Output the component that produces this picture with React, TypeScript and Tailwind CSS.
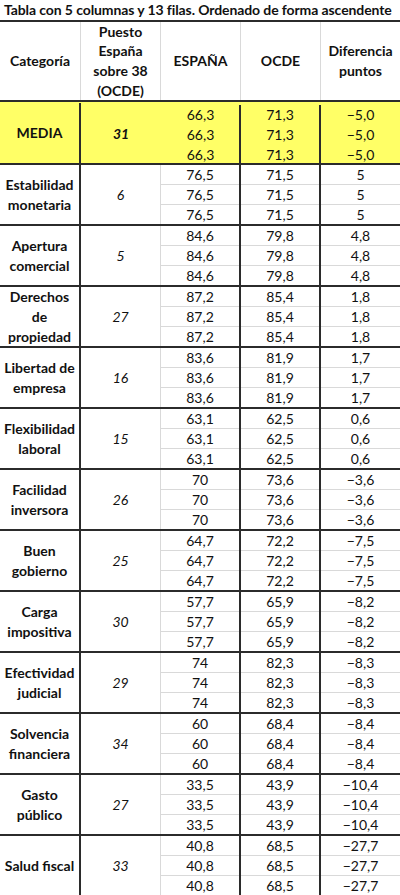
import React from "react";

interface Fila {
  categoria: string[];
  puesto: string;
  espana: string;
  ocde: string;
  dif: string;
}

const filas: Fila[] = [
  { categoria: ["Estabilidad", "monetaria"], puesto: "6", espana: "76,5", ocde: "71,5", dif: "5" },
  { categoria: ["Apertura", "comercial"], puesto: "5", espana: "84,6", ocde: "79,8", dif: "4,8" },
  { categoria: ["Derechos", "de", "propiedad"], puesto: "27", espana: "87,2", ocde: "85,4", dif: "1,8" },
  { categoria: ["Libertad de", "empresa"], puesto: "16", espana: "83,6", ocde: "81,9", dif: "1,7" },
  { categoria: ["Flexibilidad", "laboral"], puesto: "15", espana: "63,1", ocde: "62,5", dif: "0,6" },
  { categoria: ["Facilidad", "inversora"], puesto: "26", espana: "70", ocde: "73,6", dif: "−3,6" },
  { categoria: ["Buen", "gobierno"], puesto: "25", espana: "64,7", ocde: "72,2", dif: "−7,5" },
  { categoria: ["Carga", "impositiva"], puesto: "30", espana: "57,7", ocde: "65,9", dif: "−8,2" },
  { categoria: ["Efectividad", "judicial"], puesto: "29", espana: "74", ocde: "82,3", dif: "−8,3" },
  { categoria: ["Solvencia", "financiera"], puesto: "34", espana: "60", ocde: "68,4", dif: "−8,4" },
  { categoria: ["Gasto", "público"], puesto: "27", espana: "33,5", ocde: "43,9", dif: "−10,4" },
  { categoria: ["Salud fiscal"], puesto: "33", espana: "40,8", ocde: "68,5", dif: "−27,7" },
];

function ValueCol({ value, className, gray }: { value: string; className: string; gray: boolean }) {
  return (
    <div className={`flex flex-col ${className}`}>
      {[0, 1, 2].map((i) => (
        <div
          key={i}
          className={`flex items-center justify-center ${i < 2 ? "h-[20px] border-b" : "h-[19px]"} ${gray ? "border-[#d9d9d9]" : "border-transparent"}`}
        >
          {value}
        </div>
      ))}
    </div>
  );
}

function Grupo({ fila, media }: { fila: Fila; media?: boolean }) {
  return (
    <div
      className={`flex border-b-2 border-[#2b2b2b] ${media ? "bg-[#ffff66] h-[63px] pt-[3px]" : "h-[61px]"}`}
    >
      <div
        className={`w-[81px] border-r-2 border-[#2b2b2b] flex flex-col items-center justify-center font-bold leading-[20px] text-center ${media ? "-mt-[2px]" : ""}`}
      >
        {fila.categoria.map((l) => (
          <span key={l}>{l}</span>
        ))}
      </div>
      <div
        className={`w-[80px] flex items-center justify-center italic ${media ? "font-bold -mt-[2px]" : "border-r border-[#d9d9d9]"}`}
      >
        {fila.puesto}
      </div>
      <ValueCol value={fila.espana} gray={!media} className={`w-[80px] border-r-2 border-[#2b2b2b] ${media ? "pl-px" : ""}`} />
      <ValueCol value={fila.ocde} gray={!media} className="w-[80px] border-r-2 border-[#2b2b2b]" />
      <ValueCol value={fila.dif} gray={!media} className="flex-1" />
    </div>
  );
}

export default function App() {
  return (
    <div
      className="w-[400px] h-[895px] overflow-hidden bg-white text-[#111] text-[14px]"
      style={{ fontFamily: "Lato, 'Noto Sans', sans-serif" }}
    >
      <div className="h-[22px] border-b-2 border-[#2b2b2b] px-[4px] font-bold text-[14px] leading-[20px] whitespace-nowrap tracking-[-0.1px]">
        Tabla con 5 columnas y 13 filas. Ordenado de forma ascendente
      </div>
      <div className="h-[80px] flex border-b-2 border-[#2b2b2b] font-bold text-center leading-[19.7px]">
        <div className="w-[81px] border-r border-[#d9d9d9] flex items-center justify-center">Categoría</div>
        <div className="w-[80px] border-r border-[#d9d9d9] flex flex-col items-center justify-center">
          <span>Puesto</span>
          <span>España</span>
          <span>sobre 38</span>
          <span>(OCDE)</span>
        </div>
        <div className="w-[80px] border-r border-[#d9d9d9] flex items-center justify-center">ESPAÑA</div>
        <div className="w-[80px] border-r border-[#d9d9d9] flex items-center justify-center">OCDE</div>
        <div className="flex-1 flex flex-col items-center justify-center">
          <span>Diferencia</span>
          <span>puntos</span>
        </div>
      </div>
      <Grupo media fila={{ categoria: ["MEDIA"], puesto: "31", espana: "66,3", ocde: "71,3", dif: "−5,0" }} />
      {filas.map((f) => (
        <Grupo key={f.categoria.join(" ")} fila={f} />
      ))}
    </div>
  );
}
